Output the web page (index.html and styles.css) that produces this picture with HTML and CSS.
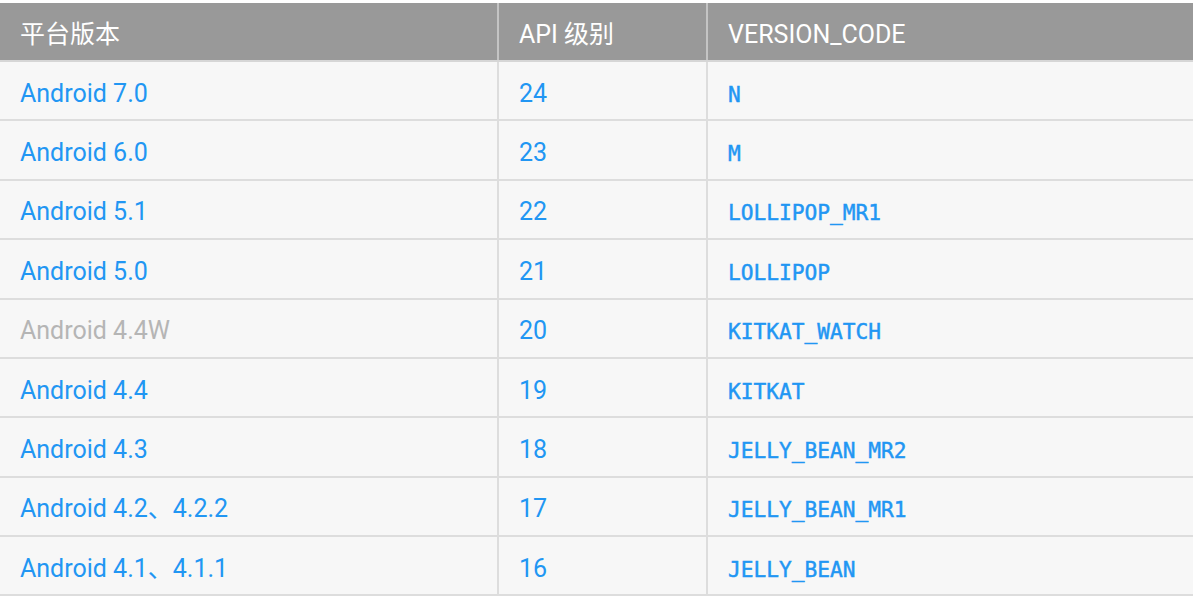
FILE: index.html
```html
<!DOCTYPE html>
<html lang="zh">
<head>
<meta charset="utf-8">
<title>Android 版本</title>
<link rel="stylesheet" href="styles.css">
</head>
<body>
<table class="versions">
  <colgroup>
    <col class="c-platform">
    <col class="c-api">
    <col class="c-code">
  </colgroup>
  <thead>
    <tr><th>平台版本</th><th>API 级别</th><th>VERSION_CODE</th></tr>
  </thead>
  <tbody>
    <tr><td class="link">Android 7.0</td><td class="link">24</td><td><code>N</code></td></tr>
    <tr><td class="link">Android 6.0</td><td class="link">23</td><td><code>M</code></td></tr>
    <tr><td class="link">Android 5.1</td><td class="link">22</td><td><code>LOLLIPOP_MR1</code></td></tr>
    <tr><td class="link">Android 5.0</td><td class="link">21</td><td><code>LOLLIPOP</code></td></tr>
    <tr><td class="muted">Android 4.4W</td><td class="link">20</td><td><code>KITKAT_WATCH</code></td></tr>
    <tr><td class="link">Android 4.4</td><td class="link">19</td><td><code>KITKAT</code></td></tr>
    <tr><td class="link">Android 4.3</td><td class="link">18</td><td><code>JELLY_BEAN_MR2</code></td></tr>
    <tr><td class="link">Android 4.2、4.2.2</td><td class="link">17</td><td><code>JELLY_BEAN_MR1</code></td></tr>
    <tr><td class="link">Android 4.1、4.1.1</td><td class="link">16</td><td><code>JELLY_BEAN</code></td></tr>
  </tbody>
</table>
</body>
</html>
```
FILE: styles.css
```css
html, body {
  margin: 0;
  padding: 0;
  background: #ffffff;
  overflow: hidden;
}
body {
  padding-top: 3px;
  font-family: Roboto, "Noto Sans CJK SC", sans-serif;
}
.versions {
  width: 1193px;
  border-collapse: collapse;
  table-layout: fixed;
  font-size: 25px;
}
.c-platform { width: 498px; }
.c-api { width: 209px; }
.c-code { width: auto; }

.versions th {
  background: #999999;
  color: #ffffff;
  font-weight: 400;
  text-align: left;
  height: 58px;
  padding: 5px 0 0 20px;
  box-sizing: border-box;
  border-left: 2px solid #c4c4c4;
  border-bottom: 2px solid #d6d6d6;
  line-height: 1;
}
.versions th:first-child { border-left: none; padding-left: 20px; }

.versions td {
  background: #f7f7f7;
  height: 52.375px;
  padding: 5px 0 0 20px;
  box-sizing: content-box;
  border-left: 2px solid #dddddd;
  border-bottom: 2px solid #dddddd;
  line-height: 1;
  vertical-align: middle;
}
.versions td:first-child { border-left: none; padding-left: 20px; }

.link { color: #2196f3; }
.muted { color: #b5b5b5; }

code {
  font-family: "DejaVu Sans Mono", monospace;
  font-size: 21.2px;
  color: #2196f3;
  font-weight: 400;
  -webkit-text-stroke: 0.45px #2196f3;
}
```
